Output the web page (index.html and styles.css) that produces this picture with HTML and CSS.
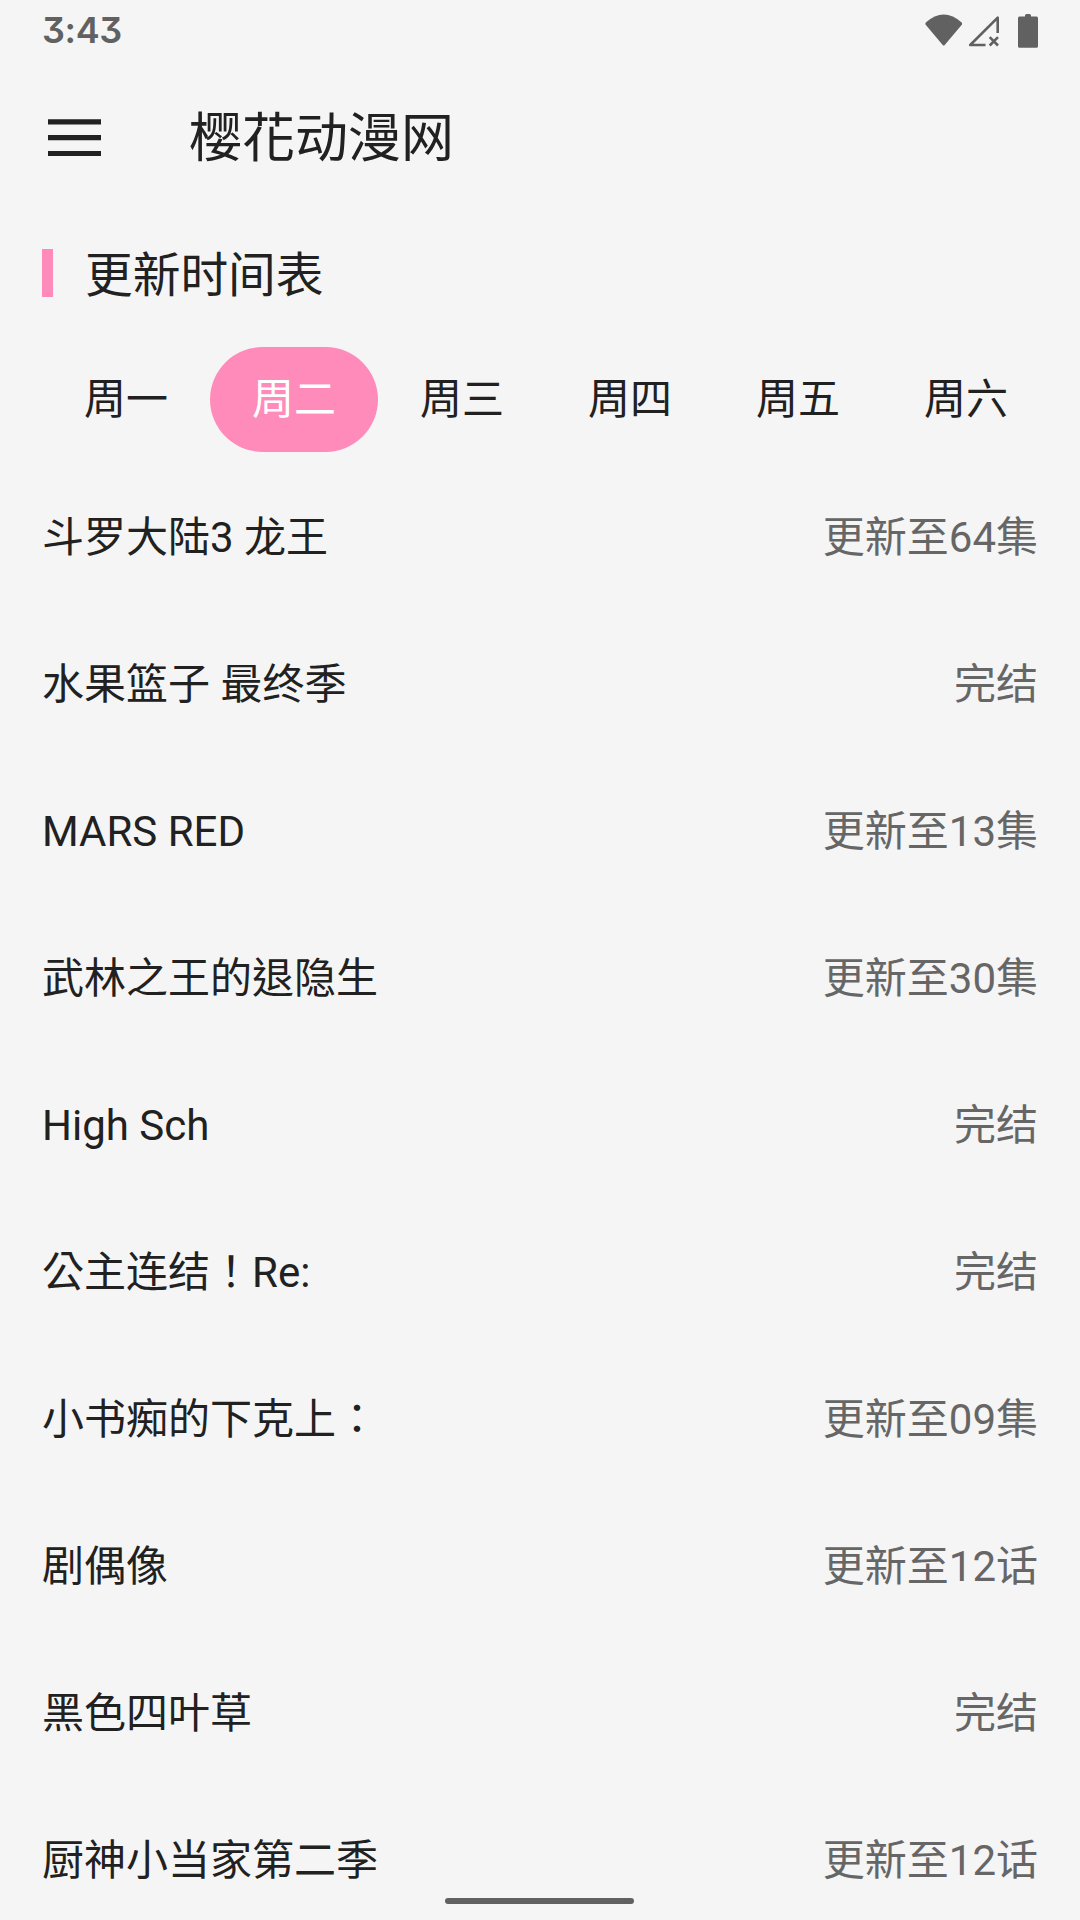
FILE: index.html
```html
<!DOCTYPE html>
<html lang="zh-TW">
  <head>
    <meta charset="UTF-8" />
    <meta name="viewport" content="width=device-width, initial-scale=1.0" />
    <title>樱花动漫网</title>
    <link rel="stylesheet" href="styles.css">
  </head>
  <body>
    <div class="status-bar">
      <span class="clock">3:43</span>
      <svg class="status-icons" width="116" height="36" viewBox="0 0 116 36">
        <path d="M0.8 8.5Q18.7-7.5 36.7 8.5Q37.5 9.7 36.6 10.9L19.7 31Q18.7 32 17.7 31L0.9 10.9Q0 9.7 0.8 8.5Z" />
        <path class="line" d="M60.5 31H45.2L72.7 3.7V19M64.7 23.2L73 31.5M73 23.2L64.7 31.5" />
        <path d="M100 2.5V1.5Q100 0 101.5 0H104.5Q106 0 106 1.5V2.5H111.5Q113 2.5 113 4V32.2Q113 33.7 111.5 33.7H94.5Q93 33.7 93 32.2V4Q93 2.5 94.5 2.5Z" />
      </svg>
    </div>

    <header class="toolbar">
      <svg class="menu-icon" width="53" height="38" viewBox="0 0 53 38">
        <path d="M0 0.3H53V5.5H0ZM0 16.1H53V21.3H0ZM0 31.9H53V37.1H0Z" />
      </svg>
      <h1>樱花动漫网</h1>
    </header>

    <main>
      <h2>更新时间表</h2>

      <nav class="tabs">
        <a class="tab">周一</a>
        <a class="tab active">周二</a>
        <a class="tab">周三</a>
        <a class="tab">周四</a>
        <a class="tab">周五</a>
        <a class="tab">周六</a>
      </nav>

      <ul class="anime-list">
        <li><span>斗罗大陆3 龙王</span><span class="episode">更新至64集</span></li>
        <li><span>水果篮子 最终季</span><span class="episode">完结</span></li>
        <li><span>MARS RED</span><span class="episode">更新至13集</span></li>
        <li><span>武林之王的退隐生</span><span class="episode">更新至30集</span></li>
        <li><span>High Sch</span><span class="episode">完结</span></li>
        <li><span>公主连结！Re:</span><span class="episode">完结</span></li>
        <li><span>小书痴的下克上：</span><span class="episode">更新至09集</span></li>
        <li><span>剧偶像</span><span class="episode">更新至12话</span></li>
        <li><span>黑色四叶草</span><span class="episode">完结</span></li>
        <li><span>厨神小当家第二季</span><span class="episode">更新至12话</span></li>
      </ul>
    </main>

    <div class="home-handle"></div>
  </body>
</html>
```
FILE: styles.css
```css
* {
  box-sizing: border-box;
}

body {
  margin: 0;
  height: 1920px;
  overflow: hidden;
  background-color: #f5f5f5;
  color: #212121;
  font-family: Roboto, "Noto Sans CJK TC", sans-serif;
  font-size: 42px;
}

h1,
h2 {
  margin: 0;
  font-weight: 400;
}

.status-bar {
  display: flex;
  justify-content: space-between;
  height: 63px;
  padding: 14px 39px 0 42px;
  color: #616161;
}

.clock {
  font-family: Inter, sans-serif;
  font-size: 36px;
  font-weight: 600;
  line-height: 32px;
  letter-spacing: -0.4px;
  font-feature-settings: "cv09";
}

.status-icons {
  fill: #616161;
}

.status-icons .line {
  fill: none;
  stroke: #616161;
  stroke-width: 2.6;
  stroke-linejoin: round;
}

.toolbar {
  display: flex;
  align-items: center;
  height: 147px;
  padding: 2px 48px 0;
}

.menu-icon {
  fill: #212121;
}

h1 {
  margin: 2px 0 0 88px;
  font-size: 53px;
  line-height: 76px;
}

h2 {
  display: flex;
  align-items: center;
  height: 126px;
  padding: 6px 0 0 42px;
  font-size: 47.7px;
  line-height: 52px;
}

h2::before {
  content: "";
  width: 11px;
  height: 48px;
  margin: 0 32px 6px 0;
  background-color: #ff8bba;
}

.tabs {
  display: flex;
  margin-top: 11px;
  padding-left: 42px;
}

.tab {
  width: 168px;
  height: 105px;
  border-radius: 53px;
  line-height: 105px;
  text-align: center;
}

.tab.active {
  background-color: #ff8bba;
  color: white;
}

.anime-list {
  margin: 12px 0 0;
  padding: 0 42px;
  list-style: none;
}

.anime-list li {
  display: flex;
  align-items: center;
  justify-content: space-between;
  height: 147px;
  line-height: 49px;
}

.episode {
  color: #666;
}

.home-handle {
  position: absolute;
  left: 445px;
  top: 1898px;
  width: 189px;
  height: 6px;
  border-radius: 3px;
  background-color: #616161;
}
```
